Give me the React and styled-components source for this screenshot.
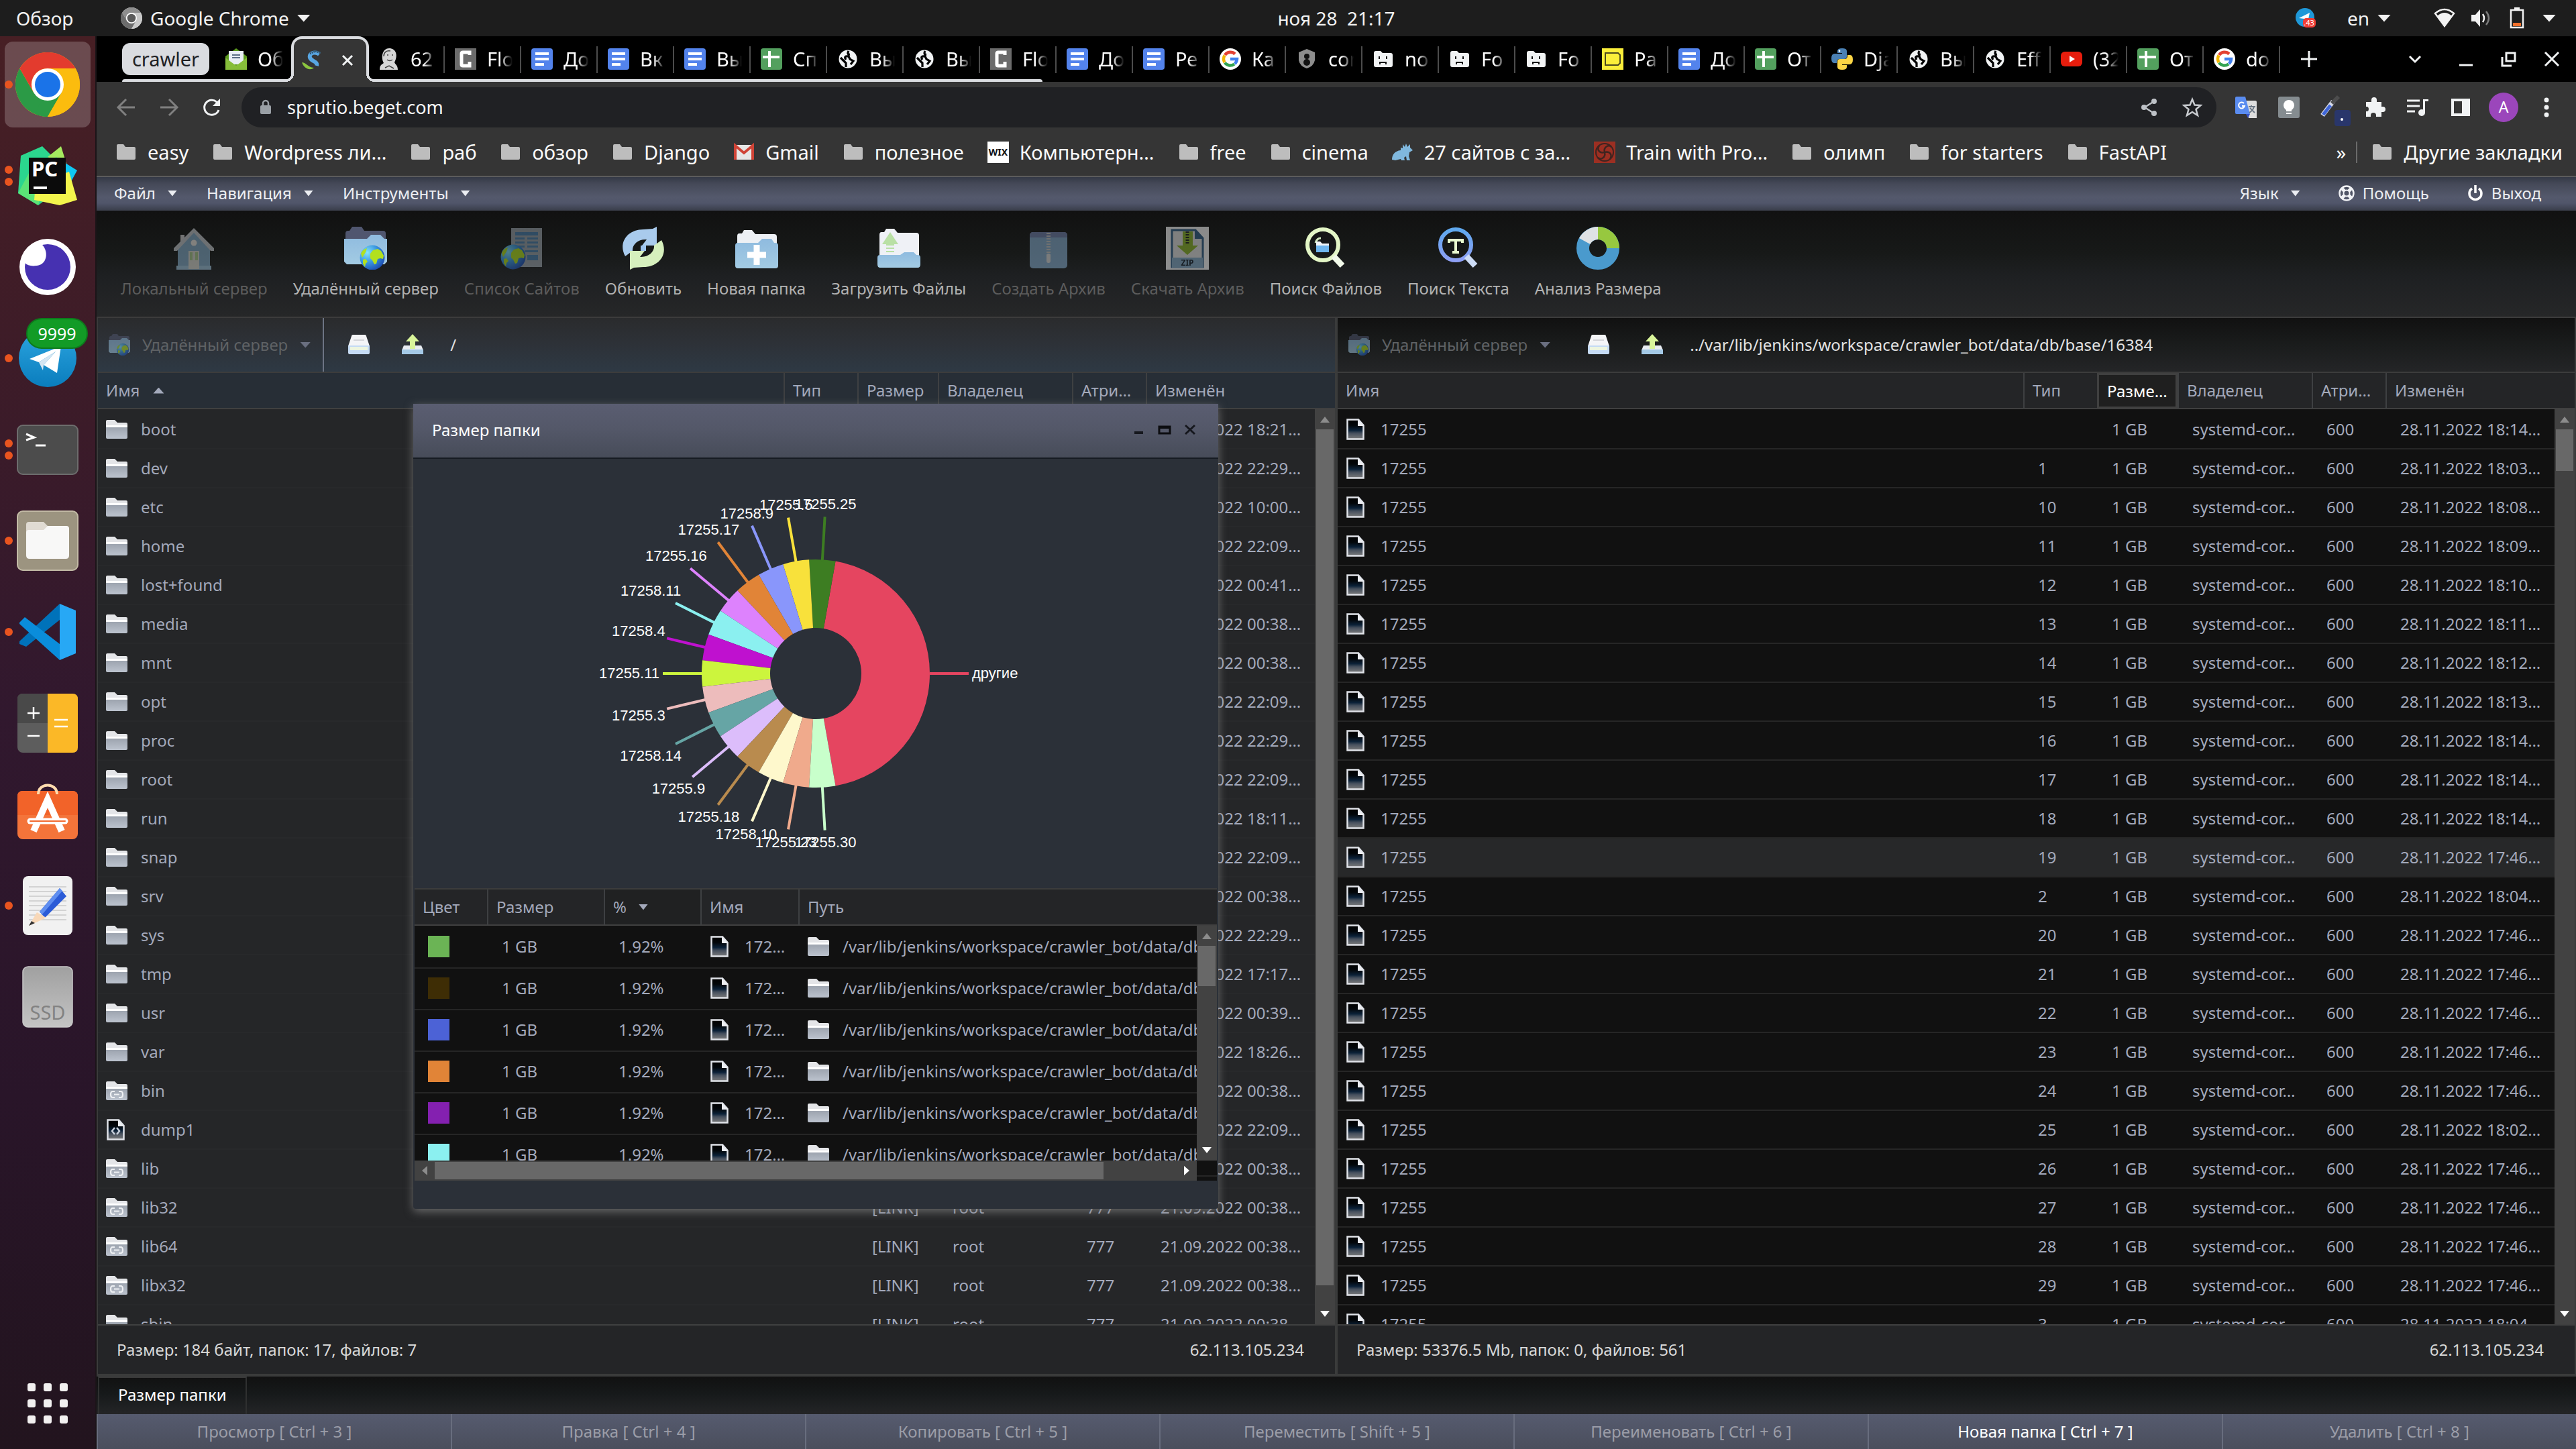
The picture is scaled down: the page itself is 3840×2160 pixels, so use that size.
import React from 'react';
import styled, { createGlobalStyle, css } from 'styled-components';

const ui = '"Noto Sans", "Open Sans", sans-serif';

const GlobalStyle = createGlobalStyle`
  * { box-sizing: border-box; }
  body { margin: 0; background: #111; font-family: ${ui}; overflow: hidden; }
  button { font: inherit; color: inherit; border: 0; padding: 0; margin: 0; background: none; cursor: pointer; }
  a { color: inherit; text-decoration: none; }
  svg { display: block; flex: none; }
`;

/* ---------- shell ---------- */

const Screen = styled.div`
  display: flex;
  flex-direction: column;
  height: 100vh;
  color: #f2f2f2;
`;

const TopBar = styled.header`
  display: grid;
  grid-template-columns: 144px 1fr auto 1fr;
  align-items: center;
  flex: none;
  height: 54px;
  background: #1d1d1d;
  font-size: 28px;
  line-height: 36px;
`;

const Overview = styled.button`
  justify-self: start;
  padding-left: 24px;
`;

const AppMenu = styled.button`
  display: flex;
  align-items: center;
  justify-self: start;
  gap: 12px;
  padding-left: 36px;
`;

const Clock = styled.time`
  white-space: pre;
`;

const Tray = styled.div`
  display: flex;
  align-items: center;
  justify-content: flex-end;
  gap: 22px;
  padding-right: 30px;
`;

const Language = styled.button`
  display: flex;
  align-items: center;
  gap: 12px;
  padding: 0 42px 0 24px;
`;

const Arrow = styled.i`
  display: inline-block;
  flex: none;
  width: ${(p) => p.$w || 14}px;
  height: ${(p) => p.$h || 9}px;
  background: ${(p) => p.$color || 'currentColor'};
  clip-path: ${(p) =>
    p.$up ? 'polygon(50% 0, 100% 100%, 0 100%)'
      : p.$left ? 'polygon(100% 0, 100% 100%, 0 50%)'
      : p.$right ? 'polygon(0 0, 100% 50%, 0 100%)'
      : 'polygon(0 0, 100% 0, 50% 100%)'};
`;

const Body = styled.div`
  display: flex;
  flex: 1;
  min-height: 0;
`;

/* ---------- dock ---------- */

const Dock = styled.nav`
  display: flex;
  flex-direction: column;
  align-items: center;
  gap: 8px;
  flex: none;
  width: 144px;
  padding: 8px 0 28px;
  border-right: 2px solid #1b1418;
  background: linear-gradient(#471f24, #3b1b29 28%, #31182e 48%, #291529 75%, #22141e);
`;

const DockButton = styled.button`
  position: relative;
  display: grid;
  place-items: center;
  width: 128px;
  height: 128px;
  border-radius: 12px;
  background: ${(p) => (p.$active ? 'rgba(255, 255, 255, 0.2)' : 'none')};
`;

const Running = styled.span`
  position: absolute;
  left: 0;
  top: 0;
  bottom: 0;
  display: flex;
  flex-direction: column;
  justify-content: center;
  gap: 6px;

  i {
    width: 12px;
    height: 12px;
    border-radius: 50%;
    background: #e9541f;
  }
`;

const Badge = styled.span`
  position: absolute;
  top: 4px;
  right: 4px;
  width: 92px;
  height: 46px;
  border: 2px solid #0d7a1c;
  border-radius: 23px;
  background: #129b26;
  color: #fff;
  font-size: 25px;
  line-height: 42px;
  text-align: center;
`;

const AppsButton = styled.button`
  display: grid;
  grid-template-columns: repeat(3, 12px);
  gap: 12px;
  margin-top: auto;
  padding: 10px;

  i {
    width: 12px;
    height: 12px;
    border-radius: 3px;
    background: #f2f0f0;
  }
`;

/* ---------- browser ---------- */

const Browser = styled.div`
  display: flex;
  flex-direction: column;
  flex: 1;
  min-width: 0;
`;

const TabStrip = styled.div`
  display: flex;
  align-items: center;
  flex: none;
  height: 68px;
  padding: 0 4px 0 38px;
  background: #000;
  font-size: 29px;
  line-height: 40px;
`;

const TabGroup = styled.div`
  position: relative;
  display: flex;
  align-items: center;
  height: 68px;

  &::after {
    content: '';
    position: absolute;
    left: 0;
    right: 20px;
    bottom: 0;
    height: 4px;
    border-radius: 4px 4px 0 0;
    background: #dadce0;
  }
`;

const GroupName = styled.button`
  width: 130px;
  height: 48px;
  margin-right: 8px;
  border-radius: 12px;
  background: #dadce0;
  color: #202124;
`;

const Tab = styled.button`
  position: relative;
  display: flex;
  align-items: center;
  gap: 16px;
  width: 114px;
  height: 68px;
  padding-left: 16px;
  color: #fff;

  ${(p) => p.$divided && css`
    &::after {
      content: '';
      position: absolute;
      right: -1px;
      top: 15px;
      width: 2px;
      height: 40px;
      background: #4c4c4c;
    }
  `}
`;

const TabTitle = styled.span`
  width: 38px;
  overflow: hidden;
  white-space: nowrap;
  text-align: left;
  mask-image: linear-gradient(90deg, #000 50%, transparent);
`;

const corner = css`
  content: '';
  position: absolute;
  bottom: 0;
  width: 12px;
  height: 12px;
`;

const ActiveTab = styled.div`
  position: relative;
  z-index: 1;
  display: flex;
  align-items: center;
  gap: 18px;
  width: 116px;
  height: 68px;
  margin-right: -2px;
  padding-left: 12px;
  border: 4px solid #dadce0;
  border-bottom: 0;
  border-radius: 16px 16px 0 0;
  background: #353535;

  &::before {
    ${corner}
    left: -12px;
    background: radial-gradient(circle at 0 0, transparent 8px, #dadce0 8px 12px, #353535 12px);
  }
  &::after {
    ${corner}
    right: -12px;
    background: radial-gradient(circle at 100% 0, transparent 8px, #dadce0 8px 12px, #353535 12px);
  }
`;

const IconButton = styled.button`
  display: grid;
  place-items: center;
  flex: none;
  width: 64px;
  height: 60px;
`;

const NewTab = styled(IconButton)`
  margin-left: 12px;
`;

const StripControls = styled.div`
  display: flex;
  margin-left: auto;

  ${IconButton}:first-child { margin-right: 12px; }
`;

const AddressRow = styled.div`
  display: flex;
  align-items: center;
  flex: none;
  height: 76px;
  padding: 0 12px;
  background: #353535;
`;

const Omnibox = styled.form`
  display: flex;
  align-items: center;
  flex: 1;
  height: 60px;
  margin: 0 12px;
  padding: 0 4px 0 24px;
  border-radius: 30px;
  background: #202124;

  input {
    flex: 1;
    min-width: 0;
    padding: 0 0 0 20px;
    border: 0;
    background: none;
    color: #f5f5f5;
    font: 27px/40px ${ui};
    outline: none;
  }
`;

const Bookmarks = styled.nav`
  display: flex;
  align-items: center;
  gap: 35px;
  flex: none;
  height: 66px;
  padding: 0 20px 6px 28px;
  border-bottom: 2px solid #5c5c5c;
  background: #353535;
  color: #fafafa;
  font-size: 29px;
  line-height: 40px;
`;

const Bookmark = styled.a`
  display: flex;
  align-items: center;
  gap: 16px;
  white-space: nowrap;
`;

const Overflow = styled.button`
  margin-left: auto;
`;

const Rule = styled.span`
  width: 2px;
  height: 32px;
  margin: 0 -14px 0 -20px;
  background: #6a6a6a;
`;

/* ---------- file manager ---------- */

const Manager = styled.main`
  position: relative;
  display: flex;
  flex-direction: column;
  flex: 1;
  min-height: 0;
  color: #a3a9bb;
  font-size: 24px;
  line-height: 32px;
`;

const MenuBar = styled.nav`
  display: flex;
  justify-content: space-between;
  flex: none;
  height: 50px;
  padding: 0 52px 0 26px;
  background: linear-gradient(#343946, #454958 20%, #54596c 60%, #50556a 78%, #3a3e4a);
  color: #eceef2;
`;

const MenuGroup = styled.div`
  display: flex;
  align-items: center;
  gap: ${(p) => p.$gap}px;
  padding-bottom: 2px;
`;

const MenuItem = styled.button`
  display: flex;
  align-items: center;
  gap: ${(p) => p.$gap || 18}px;
`;

const Toolbar = styled.div`
  display: flex;
  align-items: flex-start;
  gap: 38px;
  flex: none;
  height: 160px;
  padding: 24px 36px 0;
  border-bottom: 2px solid #3c3c3c;
  background: linear-gradient(#111, #171918 40%, #1e2022 62%, #262728);
`;

const ToolButton = styled.button`
  display: flex;
  flex-direction: column;
  align-items: center;
  gap: 12px;
  color: #b2b2b2;
  white-space: nowrap;

  &:disabled { color: #5c5c5c; }
  &:disabled svg { opacity: 0.5; }
`;

const Panes = styled.div`
  display: grid;
  grid-template-columns: 1fr 1fr;
  gap: 4px;
  flex: 1;
  min-height: 0;
  padding: 0 2px;
  background: #3a3b3b;
`;

const Pane = styled.section`
  display: flex;
  flex-direction: column;
  min-width: 0;
  min-height: 0;
`;

const PathBar = styled.div`
  display: flex;
  align-items: center;
  flex: none;
  height: 82px;
  padding-left: 16px;
  border-bottom: 2px solid #3c3c3c;
  background: ${(p) => (p.$active ? 'linear-gradient(#2a2b2d, #2d3137 45%, #2e3944)' : 'linear-gradient(#111, #1a1c1c 50%, #242527)')};
  color: #e2e2e2;
`;

const ServerButton = styled.button`
  display: flex;
  align-items: center;
  gap: 18px;
  height: 80px;
  padding-right: 18px;
  border-right: 2px solid ${(p) => (p.$active ? '#6d7484' : 'transparent')};
  color: #5f6265;

  svg { opacity: 0.5; }
`;

const PathTools = styled.div`
  display: flex;
  gap: 48px;
  padding: 0 40px 0 36px;
`;

const ListArea = styled.div`
  position: relative;
  flex: 1;
  min-height: 0;
  overflow: hidden;
  background: ${(p) => (p.$active ? '#252628' : '#111')};
`;

const FileTable = styled.table`
  width: 100%;
  table-layout: fixed;
  border-collapse: separate;
  border-spacing: 0;

  th {
    height: 54px;
    padding: 0 0 0 12px;
    border-bottom: 2px solid #404040;
    border-left: 2px solid #3e4042;
    background: ${(p) => (p.$active ? '#272e36' : '#242527')};
    font-weight: 400;
    text-align: left;
    white-space: nowrap;
  }
  th:first-child, td:first-child { border-left: 0; padding-left: 12px; }
  td {
    height: 58px;
    padding: 0 16px 0 22px;
    border-bottom: 2px solid ${(p) => (p.$active ? '#28292b' : '#262626')};
    overflow: hidden;
    white-space: nowrap;
  }
  tbody tr:first-child td { height: 60px; border-top: 2px solid transparent; }
`;

const HoverHead = styled.th`
  && {
    border: 3px solid #404040;
    border-bottom-width: 4px;
    background: #1f1f1f;
    color: #fff;
  }
`;

const FileRow = styled.tr`
  background: ${(p) => (p.$hover ? '#272829' : 'none')};
`;

const NameCell = styled.div`
  display: flex;
  align-items: center;
  gap: 20px;
`;

const SortLabel = styled.span`
  display: inline-flex;
  align-items: center;
  gap: ${(p) => p.$gap || 18}px;
`;

const VScroll = styled.div`
  position: absolute;
  top: ${(p) => p.$top}px;
  right: 0;
  bottom: ${(p) => p.$bottom || 0}px;
  display: flex;
  flex-direction: column;
  align-items: center;
  justify-content: space-between;
  width: 30px;
  padding: 11px 0;
  background: #424242;

  &::before {
    content: '';
    position: absolute;
    top: 30px;
    left: 2px;
    right: 2px;
    height: ${(p) => p.$size};
    background: #686868;
  }
`;

const HScroll = styled.div`
  position: absolute;
  left: 0;
  right: 30px;
  bottom: 0;
  display: flex;
  align-items: center;
  justify-content: space-between;
  height: 30px;
  padding: 0 11px;
  background: #424242;

  &::before {
    content: '';
    position: absolute;
    left: 30px;
    top: 2px;
    bottom: 2px;
    width: 997px;
    background: #686868;
  }
`;

const PaneStatus = styled.footer`
  display: flex;
  align-items: center;
  justify-content: space-between;
  flex: none;
  height: 74px;
  padding: 0 46px 0 28px;
  border-top: 2px solid #404040;
  background: #242527;
  color: #d8d8d8;
`;

const TaskBar = styled.div`
  flex: none;
  height: 60px;
  border-top: 4px solid #3a3b3b;
  background: linear-gradient(#111, #16191a 45%, #242527);
`;

const TaskButton = styled.button`
  height: 56px;
  margin-left: 2px;
  padding: 0 28px 4px;
  border: 2px solid #2f3030;
  border-top-color: #3a3a3a;
  border-bottom: 0;
  color: #fff;
`;

const KeyBar = styled.div`
  display: grid;
  grid-template-columns: repeat(7, 1fr);
  flex: none;
  height: 52px;
  background: linear-gradient(#565b6f, #4a4e5c);
`;

const KeyButton = styled.button`
  border-left: 2px solid #686d7e;
  color: #fff;

  &:disabled { color: #9b9da8; }
`;

/* ---------- size window ---------- */

const Window = styled.section`
  position: absolute;
  top: 338px;
  left: 472px;
  display: flex;
  flex-direction: column;
  width: 1200px;
  height: 1200px;
  border-radius: 0 0 4px 4px;
  background: #2b3038;
  box-shadow: 0 4px 14px rgba(130, 130, 130, 0.75);
`;

const WindowTitle = styled.header`
  display: flex;
  align-items: center;
  flex: none;
  height: 82px;
  padding: 0 30px 2px 28px;
  border-bottom: 2px solid #161b22;
  background: linear-gradient(#5a5d71, #545869 45%, #474c59);
  color: #fff;
`;

const WindowButtons = styled.div`
  display: flex;
  gap: 14px;
  margin-left: auto;
`;

const ChartArea = styled.div`
  flex: none;
  height: 640px;

  text {
    font: 22px "Liberation Sans", Arial, sans-serif;
    fill: #fff;
  }
`;

const SizeList = styled.div`
  position: relative;
  flex: none;
  height: 436px;
  margin: 0 2px;
  border-top: 2px solid #3c3c3c;
  overflow: hidden;
  background: #111;
`;

const SizeTable = styled(FileTable)`
  td { height: 62px; padding-bottom: 2px; }
  td:first-child { padding-left: 20px; }
  td:nth-child(n + 4) { padding: 0 0 2px 14px; }
  tbody tr:first-child td { height: 64px; }
  th:nth-child(3) { background: #202122; }
`;

const Swatch = styled.i`
  display: block;
  width: 32px;
  height: 32px;
  background: ${(p) => p.$color};
`;

/* ---------- dock drawings ---------- */

const Art = ({ children, size = 96 }) => (
  <svg width={size} height={size} viewBox="0 0 96 96" aria-hidden="true">{children}</svg>
);

const ChromeArt = ({ size = 96, grey }) => {
  const [r, y, g, b] = grey ? ['#8e8e8e', '#c9c9c9', '#6c6c6c', '#5b5b5b'] : ['#e33b2e', '#fbbc0e', '#2b9a46', '#1a73e8'];
  return (
    <Art size={size}>
      <circle cx="48" cy="48" r="48" fill={y} />
      <path d="M6.4 24A48 48 0 0 1 89.6 24H48z" fill={r} />
      <path d="M6.4 24L27.2 60 48 72 48 96A48 48 0 0 1 6.4 24z" fill={g} />
      <path d="M68.8 60L48 96A48 48 0 0 1 30 92L40 66z" fill={g} />
      <path d="M6.4 24L27.2 60A24 24 0 0 1 48 24z" fill={r} />
      <path d="M48 24H89.6A48 48 0 0 1 48 96L68.8 60z" fill={y} />
      <circle cx="48" cy="48" r="24" fill="#fff" />
      <circle cx="48" cy="48" r="19" fill={b} />
    </Art>
  );
};

const PyCharmArt = () => (
  <Art>
    <path d="M8 18L40 4 58 22 50 80 34 92 4 74z" fill="#2bd68e" />
    <path d="M48 20L68 4 76 30z" fill="#a5ea5f" />
    <path d="M60 20L92 40 80 62 60 50z" fill="#0fc7f2" />
    <path d="M4 74L20 44 40 70 34 92z" fill="#5be377" />
    <path d="M80 42L92 84 66 92 28 84 30 60z" fill="#f3f54c" />
    <rect x="20" y="21" width="55" height="54" fill="#0b0b0b" />
    <text x="24" y="49" fontFamily="Noto Sans, sans-serif" fontWeight="700" fontSize="31" fill="#fff">PC</text>
    <rect x="27" y="64" width="20" height="4" fill="#fff" />
  </Art>
);

const InsomniaArt = () => (
  <Art>
    <circle cx="48" cy="48" r="42" fill="#fff" />
    <circle cx="48" cy="48" r="34" fill="#4631b1" />
    <path d="M14 42C14 24 26 14 40 15 50 26 46 42 36 45 26 48 18 46 14 42z" fill="#fff" />
  </Art>
);

const TelegramArt = () => (
  <Art>
    <defs><linearGradient id="tg" x2="0" y2="1"><stop stopColor="#2ca5e0" /><stop offset="1" stopColor="#0a7dbd" /></linearGradient></defs>
    <circle cx="48" cy="48" r="43" fill="url(#tg)" />
    <path d="M21 49L68 30 62 70 42 58 60 38 35 54z" fill="#fff" />
    <path d="M35 54L60 38 42 58 41 66z" fill="#d5e6f2" />
  </Art>
);

const TerminalArt = () => (
  <Art>
    <rect x="3" y="12" width="90" height="73" rx="8" fill="#4c4c4c" stroke="#6d6d6d" strokeWidth="2" />
    <path d="M16 25L28 30 16 34" fill="none" stroke="#fff" strokeWidth="3" />
    <path d="M30 42H45" stroke="#fff" strokeWidth="3" />
  </Art>
);

const FilesArt = () => (
  <Art>
    <rect x="3" y="4" width="90" height="88" rx="8" fill="#9c9480" stroke="#c2baa5" strokeWidth="2" />
    <path d="M16 24q0-4 4-4H42L48 26H74q6 0 6 6V40H16z" fill="#e0dbd2" />
    <path d="M16 36q0-4 4-4H42L48 26H76q4 0 4 4V70q0 5-5 5H21q-5 0-5-5z" fill="#f8f8f7" />
  </Art>
);

const CodeArt = () => (
  <Art>
    <path d="M6 62L66 6V30L16 70 6 66z" fill="#0072ba" />
    <path d="M6 34L14 26 66 66V90L6 36z" fill="#0a8ddb" />
    <path d="M66 6L90 16V80L66 90z" fill="#27a8f5" />
  </Art>
);

const CalcArt = () => (
  <Art>
    <rect x="3" y="4" width="90" height="88" rx="8" fill="#5d5d5d" />
    <path d="M11 4H48V48H3V12q0-8 8-8z" fill="#494949" />
    <path d="M48 4H85q8 0 8 8V84q0 8-8 8H48z" fill="#fbb827" />
    <path d="M18 33H36M27 24V42M18 67H36M58 43H78M58 53H78" stroke="#fff" strokeWidth="2.5" />
  </Art>
);

const StoreArt = () => (
  <Art>
    <rect x="3" y="13" width="90" height="72" rx="8" fill="#f4743a" />
    <path d="M3 49V21q0-8 8-8H85q8 0 8 8V49z" fill="#f26329" />
    <path d="M34 18C34 0 62 0 62 18" fill="none" stroke="#ffdcae" strokeWidth="4" />
    <path d="M27 73L48 26 69 73" fill="none" stroke="#fff" strokeWidth="10" />
    <path d="M22 58H74" stroke="#fff" strokeWidth="9" strokeLinecap="round" />
    <path d="M22 58H74" stroke="#f26a30" strokeWidth="2" strokeLinecap="round" />
  </Art>
);

const EditorArt = () => (
  <Art>
    <rect x="11" y="4" width="74" height="88" rx="8" fill="#f1f1f1" />
    <path d="M20 20H76M20 27H76M20 34H76M20 41H76M20 48H76M20 55H76M20 62H76M20 69H76" stroke="#c9c9c9" strokeWidth="1.5" />
    <path d="M36 57L66 22 76 34 44 66z" fill="#2b5bd7" />
    <path d="M36 57L66 22 70 26 40 61z" fill="#5f8ef0" />
    <path d="M20 78L32 58 46 66z" fill="#f8d8b8" />
    <path d="M20 78L24 71 29 74z" fill="#333" />
  </Art>
);

const SsdArt = () => (
  <Art>
    <defs><linearGradient id="ssd" x2="0" y2="1"><stop stopColor="#a0a0a0" /><stop offset="1" stopColor="#c4c4c4" /></linearGradient></defs>
    <rect x="11" y="3" width="74" height="90" rx="8" fill="url(#ssd)" stroke="#c9c9c9" strokeWidth="1.5" />
    <text x="48" y="82" textAnchor="middle" fontFamily="Noto Sans, sans-serif" fontSize="29" fill="#828282">SSD</text>
  </Art>
);

/* ---------- small drawings ---------- */

const Glyph = ({ s = 32, box = 32, children, ...rest }) => (
  <svg width={s} height={s} viewBox={`0 0 ${box} ${box}`} fill="none" aria-hidden="true" {...rest}>{children}</svg>
);

const Favicons = {
  mail: (
    <Glyph>
      <path d="M0 12L16 0 32 12V32H0z" fill="#5b9a1f" />
      <rect x="5" y="4" width="22" height="20" fill="#e8eef5" />
      <path d="M10 10H22M10 14H22" stroke="#5c6f86" strokeWidth="2" />
      <path d="M0 14L16 26 32 14V32H0z" fill="#86bd3a" />
    </Glyph>
  ),
  beget: (
    <Glyph>
      <path d="M26 7C20 2 10 5 12 12 14 18 24 17 22 24" stroke="#58a6e2" strokeWidth="6" />
      <path d="M12 6L20 2 28 5" stroke="#32536c" strokeWidth="3" strokeDasharray="2 1" />
      <path d="M0 19C8 20 8 26 18 27 12 32 3 28 0 19z" fill="#8cc63f" />
    </Glyph>
  ),
  jenkins: (
    <Glyph>
      <path d="M2 32C2 25 5 24 8 22 3 12 7 0 16 0 26 0 30 10 24 21 25 24 29 25 29 32z" fill="#d6d6d6" />
      <path d="M8 12C8 6 12 3 18 4M20 10h2M13 10h2M13 17q4 3 8 0M10 29L16 26 23 30" stroke="#444" strokeWidth="1.5" />
    </Glyph>
  ),
  c: (
    <Glyph>
      <rect width="32" height="32" fill="#6b6b6b" />
      <path d="M22 10V6H12q-2 0-2 2V24q0 2 2 2H22V20" stroke="#fff" strokeWidth="5" />
    </Glyph>
  ),
  doc: (
    <Glyph>
      <rect width="32" height="32" rx="4" fill="#5383ec" />
      <path d="M6 8H26M6 16H26M6 24H19" stroke="#fff" strokeWidth="4" />
    </Glyph>
  ),
  sheet: (
    <Glyph>
      <rect width="32" height="32" rx="4" fill="#53a05e" />
      <path d="M3 13H28M13 4V28" stroke="#fff" strokeWidth="4" />
    </Glyph>
  ),
  globe: (
    <Glyph>
      <circle cx="16" cy="16" r="13.5" fill="#f1f3f4" />
      <path d="M5 14L13 22V28M17 4q-3 6 2 5M13 17q-4-6 4-5l2 4 5 3-4 5" stroke="#000" strokeWidth="3.2" />
    </Glyph>
  ),
  google: (
    <Glyph>
      <circle cx="16" cy="16" r="16" fill="#fff" />
      <path d="M23 8.5A10 10 0 0 0 8 10" stroke="#e34133" strokeWidth="4.5" />
      <path d="M7.6 10.5A10 10 0 0 0 7.6 21" stroke="#f3b605" strokeWidth="4.5" />
      <path d="M7.8 21.5A10 10 0 0 0 22 23.5" stroke="#32a350" strokeWidth="4.5" />
      <path d="M22.5 23A10 10 0 0 0 26 16H16" stroke="#4080ee" strokeWidth="4.5" />
    </Glyph>
  ),
  shield: (
    <Glyph>
      <path d="M16 1L28 6V18Q26 27 16 30 6 27 4 18V6z" fill="#8d8d8d" />
      <circle cx="16" cy="12" r="4" fill="#111" />
      <circle cx="16" cy="21" r="5" fill="#111" />
    </Glyph>
  ),
  sad: (
    <Glyph>
      <path d="M2 7q0-3 3-3H12L15 7H27q3 0 3 3V25q0 3-3 3H5q-3 0-3-3z" fill="#f1f3f4" />
      <path d="M10 12V16M21 12V16M11 24V21H20V24" stroke="#111" strokeWidth="2" />
    </Glyph>
  ),
  yellow: (
    <Glyph>
      <rect width="32" height="32" fill="#fbef3a" />
      <path d="M5 7H24L27 10V22L24 25H5z" stroke="#4c4a1e" strokeWidth="2" />
    </Glyph>
  ),
  python: (
    <Glyph>
      <path d="M9 4q0-4 7-4 7 0 7 4V12q0 4-4 4H12q-4 0-4 6H4q-4 0-4-7T5 8H16V7H9z" fill="#4a80b4" />
      <path d="M23 28q0 4-7 4-7 0-7-4V20q0-4 4-4h7q4 0 4-6h4q4 0 4 7t-5 7H16v1h7z" fill="#fcd545" />
      <circle cx="12" cy="4" r="1.4" fill="#fff" />
    </Glyph>
  ),
  youtube: (
    <Glyph>
      <rect y="5" width="32" height="22" rx="6" fill="#e71d0d" />
      <path d="M13 11L21 16 13 21z" fill="#fff" />
    </Glyph>
  ),
  folder: (
    <Glyph>
      <path d="M2 6q0-2 2-2H12L15 8H28q2 0 2 2V25q0 2-2 2H4q-2 0-2-2z" fill="#bdbdbd" />
    </Glyph>
  ),
  gmail: (
    <Glyph>
      <rect x="2" y="5" width="28" height="22" fill="#e6e6e6" />
      <path d="M3 27V6L16 17 29 6V27" stroke="#cf4336" strokeWidth="4" />
    </Glyph>
  ),
  wix: (
    <Glyph>
      <rect width="32" height="32" fill="#fff" />
      <text x="16" y="21" textAnchor="middle" fontFamily="Noto Sans, sans-serif" fontWeight="700" fontSize="14" fill="#111">WIX</text>
    </Glyph>
  ),
  sites: (
    <Glyph>
      <path d="M0 27C0 20 4 14 13 13L13 9 16 10 16 4 19 8 21 3 23 8 27 4 27 9 31 13 26 16 25 22 27 28H22L21 22 18 24 19 28H14L13 26 5 28z" fill="#80b8de" />
    </Glyph>
  ),
  train: (
    <Glyph>
      <rect width="32" height="32" fill="#9c2f22" />
      <path d="M16 16C14 8 22 4 26 8M16 16C24 14 28 20 24 26M16 16C18 24 10 28 6 24M16 16C8 18 4 12 8 6" stroke="#3f2420" strokeWidth="2.5" />
      <circle cx="16" cy="16" r="13" stroke="#3f2420" strokeWidth="2" />
    </Glyph>
  ),
};

const line = { stroke: '#f1f3f4', strokeWidth: 3 };

const FolderIcon = ({ link }) => (
  <Glyph>
    <defs>
      <linearGradient id="fold" x2="0" y2="1"><stop stopColor="#9da4af" /><stop offset="1" stopColor="#bcc3ce" /></linearGradient>
    </defs>
    <path d="M0 4q0-2 2-2H13L17 6H30q2 0 2 2V14H0z" fill="#e4e5e8" />
    <rect y="10" width="32" height="3" fill="#fff" />
    <path d="M0 13H32V28q0 2-2 2H2q-2 0-2-2z" fill="url(#fold)" />
    {link && <path d="M13 17H10q-3 0-3 4.500T10 26H13M19 17H22q3 0 3 4.500T22 26H19M12 21.500H20" stroke="#eef0f3" strokeWidth="2.200" />}
  </Glyph>
);

const FileIcon = ({ code }) => (
  <Glyph>
    <defs>
      <linearGradient id="page" x2="0" y2="1"><stop stopColor="#000" /><stop offset=".3" stopColor="#02060a" /><stop offset=".55" stopColor="#0b2138" /><stop offset=".7" stopColor="#454f5d" /><stop offset="1" stopColor="#7c7c7c" /></linearGradient>
    </defs>
    <path d="M2.500 1.500H19L26.500 10V30.500H2.500z" fill="url(#page)" stroke="#dfe2e8" strokeWidth="2.5" />
    <path d="M18 1L27 11H18z" fill="#eceef2" />
    {code && <path d="M13 13L9 18 13 23M16 13L20 18 16 23" stroke="#c9d0dc" strokeWidth="2.5" />}
  </Glyph>
);

const DiskIcon = () => (
  <Glyph>
    <path d="M5 3q0-2 2-2H25q2 0 2 2L32 18V27q0 3-3 3H3q-3 0-3-3V18z" fill="#f4f5f7" />
    <path d="M0 17H32V27q0 3-3 3H3q-3 0-3-3z" fill="#c5dbf4" />
    <path d="M3 19H29V24H3z" fill="#edf5e0" />
    <path d="M8 9H24" stroke="#d4d6da" strokeWidth="2" />
  </Glyph>
);

const UpIcon = () => (
  <Glyph>
    <path d="M3 17H29L32 24H0z" fill="#e9edf2" />
    <path d="M0 23H32V30H0z" fill="#a4c9e6" />
    <path d="M16 0L26 11H20V22H12V11H6z" fill="#d9f59a" />
  </Glyph>
);

const Globe = ({ cx, cy }) => (
  <g transform={`translate(${cx} ${cy})`}>
    <circle r="18.500" fill="url(#ocean)" />
    <path d="M-17 -6Q-14 -13 -8 -14L-10 -8 -15 0zM-14 3L-10 2 -7 6 -10 9 -11 14 -14 9zM-3 -6L1 -11 8 -13 13 -10 17 -3 16 2 12 1 8 2 6 9 3 10 0 4 -3 1z" fill="#b2e01f" />
  </g>
);

const Tool = ({ children, size = 64 }) => (
  <svg width={size} height={size} viewBox="0 0 64 64" fill="none" aria-hidden="true">
    <defs>
      <radialGradient id="ocean" cx=".3" cy=".3" r=".8"><stop stopColor="#84e4fb" /><stop offset=".5" stopColor="#3a97e0" /><stop offset="1" stopColor="#1a49b0" /></radialGradient>
      <linearGradient id="sky" x2="0" y2="1"><stop stopColor="#8fbbdf" /><stop offset="1" stopColor="#a3cbe3" /></linearGradient>
      <linearGradient id="lens" x2="0" y2="1"><stop stopColor="#5fa8ee" /><stop offset="1" stopColor="#8ea0f5" /></linearGradient>
    </defs>
    {children}
  </svg>
);

const RemoteArt = ({ size }) => (
  <Tool size={size}>
    <path d="M2 10q0-4 4-4H8L12 0H26L30 6H58q4 0 4 4V20H2z" fill="#50566f" />
    <path d="M0 18H34L40 12H54L60 18H64V52L60 56H4L0 52z" fill="url(#sky)" />
    <Globe cx={42} cy={46} />
  </Tool>
);

const toolIcons = {
  home: (
    <Tool>
      <path d="M12 12H18V26H12z" fill="#d0d0d0" />
      <path d="M8 34L32 8 56 34V60H8z" fill="#82a9c6" />
      <path d="M6 58H58V64H6z" fill="#9dc2da" />
      <path d="M32 2L62 32V36H57L32 9 7 36H2V32z" fill="#c4c8cd" />
      <circle cx="32" cy="24" r="4.500" fill="#ece9e4" />
      <path d="M24 36H40V63H24z" fill="#d8d8cf" />
      <path d="M26 38H30V50H26zM34 38H38V50H34z" fill="#a9c98c" />
    </Tool>
  ),
  remote: <RemoteArt />,
  sites: (
    <Tool>
      <path d="M16 2H62V60H16z" fill="#9ba4ac" />
      <path d="M22 8H56V13H22zM22 16H36V19H22zM22 22H36V25H22zM22 28H36V31H22zM40 16H56V19H40zM40 22H56V25H40zM40 28H56V31H40zM36 35H56V38H36zM40 42H56V50H40z" fill="#4b82b0" />
      <Globe cx={19} cy={45} />
    </Tool>
  ),
  refresh: (
    <Tool>
      <path d="M5 44C-6 24 8 4 32 4L46 3 52 0V28H30L37 19C24 18 15 27 16 36z" fill="#a9cbed" />
      <path d="M59 20C70 40 56 60 32 60L18 61 12 64V36H34L27 45C40 46 49 37 48 28z" fill="#d6f0bd" />
      <rect x="28" y="28" width="8" height="8" fill="#9cc4ee" />
    </Tool>
  ),
  newFolder: (
    <Tool>
      <path d="M3 14q0-4 3-4H10L13 5H25L30 11H58q4 0 4 4V34H3z" fill="#edf0f4" />
      <path d="M0 28q0-4 4-4H34L40 18H54L58 24H60q4 0 4 4V58q0 4-4 4H4q-4 0-4-4z" fill="url(#sky)" />
      <path d="M32 27V57M18 42H46" stroke="#fff" strokeWidth="9" />
    </Tool>
  ),
  upload: (
    <Tool>
      <path d="M3 12q0-4 3-4H10L13 3H25L30 9H58q4 0 4 4V46H3z" fill="#eff1f6" />
      <path d="M0 46q0-4 4-4H34L40 38H54L58 42H60q4 0 4 4V56q0 5-4 5H4q-4 0-4-5z" fill="url(#sky)" />
      <path d="M19 8L31 26H25V28H13V26H7zM13 31H25V33H13zM13 36H25V38H13z" fill="#b9e0a5" />
    </Tool>
  ),
  archive: (
    <Tool>
      <rect x="4" y="8" width="56" height="54" rx="5" fill="#86acce" />
      <path d="M4 16V13q0-5 5-5H55q5 0 5 5V16z" fill="#7282ac" />
      <path d="M32 9V50" stroke="#cacaca" strokeWidth="6" strokeDasharray="2 2" />
      <rect x="29" y="40" width="6" height="14" rx="3" fill="#ddd" />
    </Tool>
  ),
  zip: (
    <Tool>
      <rect width="64" height="64" fill="#fff" />
      <path d="M9 5H44L55 17V60H9z" fill="#e8e8e8" stroke="#33628c" strokeWidth="3" />
      <path d="M43 4L56 18H43z" fill="#33628c" />
      <rect x="9" y="46" width="46" height="15" fill="#86acca" />
      <path d="M25 7H40V28H48L32 42 16 28H25z" fill="#8fb82c" />
      <path d="M32 7V26" stroke="#222" strokeWidth="5" strokeDasharray="2 2" />
      <text x="32" y="58" textAnchor="middle" fontFamily="Noto Sans, sans-serif" fontWeight="700" fontSize="12" fill="#16202b">ZIP</text>
    </Tool>
  ),
  findFile: (
    <Tool>
      <circle cx="28" cy="27" r="23" stroke="#e3f6c6" strokeWidth="6" />
      <path d="M44 44L57 58" stroke="#f2faea" strokeWidth="9" />
      <path d="M17 24Q19 17 25 17" stroke="#cfe6bd" strokeWidth="3" />
      <path d="M18 22H24L27 25H37V30H18z" fill="#f2f5f8" />
      <path d="M18 28H37V38H18z" fill="#6fb6ee" />
    </Tool>
  ),
  findText: (
    <Tool>
      <circle cx="28" cy="27" r="23" stroke="url(#lens)" strokeWidth="6" />
      <path d="M44 44L57 58" stroke="#cddcf6" strokeWidth="9" />
      <path d="M18 24V20H38V24M28 20V38M23 38H33" stroke="#e9f9cf" strokeWidth="4" />
    </Tool>
  ),
  donut: (
    <Tool>
      <circle cx="32" cy="32" r="22.500" stroke="#4a9acd" strokeWidth="19" />
      <path d="M32 0A32 32 0 0 1 64 32H45A13 13 0 0 0 32 19z" fill="#97c83f" />
      <path d="M32 0A32 32 0 0 0 4 17L20.500 26A13 13 0 0 1 32 19z" fill="#dfe2e4" />
    </Tool>
  ),
};

/* ---------- data ---------- */

const dockItems = [
  ['Google Chrome', <ChromeArt />, 1],
  ['PyCharm', <PyCharmArt />, 2],
  ['Insomnia', <InsomniaArt />, 0],
  ['Telegram', <TelegramArt />, 1],
  ['Terminal', <TerminalArt />, 2],
  ['Files', <FilesArt />, 1],
  ['Visual Studio Code', <CodeArt />, 1],
  ['Calculator', <CalcArt />, 0],
  ['Ubuntu Software', <StoreArt />, 0],
  ['Text Editor', <EditorArt />, 1],
  ['SSD', <SsdArt />, 0],
];

const groupTabs = [
  ['jenkins', '62'], ['c', 'Flo'], ['doc', 'До'], ['doc', 'Вк'], ['doc', 'Вы'], ['sheet', 'Сп'],
  ['globe', 'Вы'], ['globe', 'Вы'], ['c', 'Flo'],
];

const looseTabs = [
  ['doc', 'До'], ['doc', 'Ре'], ['google', 'Ка'], ['shield', 'con'], ['sad', 'no'], ['sad', 'Fo'], ['sad', 'Fo'],
  ['yellow', 'Pa'], ['doc', 'До'], ['sheet', 'От'], ['python', 'Dja'], ['globe', 'Вы'], ['globe', 'Eff'],
  ['youtube', '(32'], ['sheet', 'От'], ['google', 'do'],
];

const bookmarks = [
  ['folder', 'easy'], ['folder', 'Wordpress ли…'], ['folder', 'раб'], ['folder', 'обзор'], ['folder', 'Django'],
  ['gmail', 'Gmail'], ['folder', 'полезное'], ['wix', 'Компьютерн…'], ['folder', 'free'], ['folder', 'cinema'],
  ['sites', '27 сайтов с за…'], ['train', 'Train with Pro…'], ['folder', 'олимп'], ['folder', 'for starters'], ['folder', 'FastAPI'],
];

const tools = [
  ['Локальный сервер', 'home', true],
  ['Удалённый сервер', 'remote'],
  ['Список Сайтов', 'sites', true],
  ['Обновить', 'refresh'],
  ['Новая папка', 'newFolder'],
  ['Загрузить Файлы', 'upload'],
  ['Создать Архив', 'archive', true],
  ['Скачать Архив', 'zip', true],
  ['Поиск Файлов', 'findFile'],
  ['Поиск Текста', 'findText'],
  ['Анализ Размера', 'donut'],
];

const leftFiles = [
  ['boot', '18:21'], ['dev', '22:29'], ['etc', '10:00'], ['home', '22:09'], ['lost+found', '00:41'], ['media', '00:38'],
  ['mnt', '00:38'], ['opt', '22:09'], ['proc', '22:29'], ['root', '22:09'], ['run', '18:11'], ['snap', '22:09'],
  ['srv', '00:38'], ['sys', '22:29'], ['tmp', '17:17'], ['usr', '00:39'], ['var', '18:26'], ['bin', '00:38', 'link'],
  ['dump1', '22:09', 'code'], ['lib', '00:38', 'link'], ['lib32', '00:38', 'link'], ['lib64', '00:38', 'link'],
  ['libx32', '00:38', 'link'], ['sbin', '00:38', 'link'],
];

const rightFiles = [
  ['', '18:14'], ['1', '18:03'], ['10', '18:08'], ['11', '18:09'], ['12', '18:10'], ['13', '18:11'], ['14', '18:12'],
  ['15', '18:13'], ['16', '18:14'], ['17', '18:14'], ['18', '18:14'], ['19', '17:46'], ['2', '18:04'], ['20', '17:46'],
  ['21', '17:46'], ['22', '17:46'], ['23', '17:46'], ['24', '17:46'], ['25', '18:02'], ['26', '17:46'], ['27', '17:46'],
  ['28', '17:46'], ['29', '17:46'], ['3', '18:04'],
];

/* name, colour, radius at which the leader line ends */
const slices = [
  ['17255.25', '#3d7d22', 234], ['17255.5', '#f8e13b', 236], ['17258.9', '#8996fb', 240], ['17255.17', '#e18437', 244],
  ['17255.16', '#dd82fd', 244], ['17258.11', '#8bf0f0', 234], ['17258.4', '#bf11cf', 228], ['17255.11', '#ccf53d', 228],
  ['17255.3', '#edbcbc', 228], ['17258.14', '#66a5a5', 234], ['17255.9', '#dcbdfb', 240], ['17255.18', '#b98b4e', 244],
  ['17258.10', '#fef8cc', 240], ['17255.23', '#f0aa8c', 236], ['17255.30', '#c8ffcb', 234],
];

const swatches = ['#6bb455', '#3e2d05', '#4c62d6', '#e18437', '#8420b0', '#8bf0f0'];

const keys = [
  'Просмотр [ Ctrl + 3 ]', 'Правка [ Ctrl + 4 ]', 'Копировать [ Ctrl + 5 ]', 'Переместить [ Shift + 5 ]',
  'Переименовать [ Ctrl + 6 ]', 'Новая папка [ Ctrl + 7 ]', 'Удалить [ Ctrl + 8 ]',
];

/* ---------- parts ---------- */

const point = (r, deg) => {
  const a = (deg * Math.PI) / 180;
  return [600 + r * Math.sin(a), 320 - r * Math.cos(a)];
};

const ring = (from, to) => {
  const [a, b, c, d] = [point(170, from), point(170, to), point(68, to), point(68, from)];
  return `M${a}A170 170 0 0 0 ${b}L${c}A68 68 0 0 1 ${d}z`;
};

function Donut() {
  const step = 200 / slices.length;
  return (
    <svg width="1200" height="640" viewBox="0 0 1200 640" role="img" aria-label="Размер папки">
      <path d={ring(170, 10)} fill="#e54560" />
      <path d="M770 320H828" stroke="#e54560" strokeWidth="4" />
      <text x="833" y="327">другие</text>
      {slices.map(([name, color, reach], i) => {
        const mid = 10 - step * (i + 0.5);
        const [x1, y1] = point(168, mid);
        const [x2, y2] = point(reach, mid);
        const side = Math.abs(Math.sin((mid * Math.PI) / 180));
        const [tx, ty] = point(251 + (name.length > 7 ? 27 : 21) * side, mid);
        return (
          <g key={name}>
            <path d={ring(10 - step * i, 10 - step * (i + 1))} fill={color} />
            <path d={`M${x1} ${y1}L${x2} ${y2}`} stroke={color} strokeWidth="4" />
            <text x={tx} y={ty + 7} textAnchor="middle">{name}</text>
          </g>
        );
      })}
    </svg>
  );
}

const FileCols = () => (
  <colgroup>
    <col />
    <col style={{ width: 110 }} />
    <col style={{ width: 120 }} />
    <col style={{ width: 200 }} />
    <col style={{ width: 110 }} />
    <col style={{ width: 282 }} />
  </colgroup>
);

function PathPanel({ active, path }) {
  return (
    <PathBar $active={active}>
      <ServerButton $active={active} disabled>
        <RemoteArt size={32} />
        Удалённый сервер
        <Arrow $w={16} $color="#6a6f80" />
      </ServerButton>
      <PathTools>
        <button aria-label="Диск"><DiskIcon /></button>
        <button aria-label="Вверх"><UpIcon /></button>
      </PathTools>
      {path}
    </PathBar>
  );
}

function LeftPane() {
  return (
    <Pane>
      <PathPanel active path="/" />
      <ListArea $active>
        <FileTable $active>
          <FileCols />
          <thead>
            <tr>
              <th><SortLabel $gap={20}>Имя <Arrow $up $w={16} /></SortLabel></th>
              <th>Тип</th><th>Размер</th><th>Владелец</th><th>Атри…</th><th>Изменён</th>
            </tr>
          </thead>
          <tbody>
            {leftFiles.map(([name, time, kind]) => (
              <FileRow key={name}>
                <td><NameCell>{kind === 'code' ? <FileIcon code /> : <FolderIcon link={kind === 'link'} />}{name}</NameCell></td>
                <td />
                <td>{kind === 'link' ? '[LINK]' : ''}</td>
                <td>root</td>
                <td>{kind === 'link' ? '777' : '755'}</td>
                <td>21.09.2022 {time}…</td>
              </FileRow>
            ))}
          </tbody>
        </FileTable>
        <VScroll $top={54} $size="calc(100% - 88px)"><Arrow $up $w={14} $color="#8c8c8c" /><Arrow $w={14} $color="#fff" /></VScroll>
      </ListArea>
      <PaneStatus><span>Размер: 184 байт, папок: 17, файлов: 7</span><span>62.113.105.234</span></PaneStatus>
    </Pane>
  );
}

function RightPane() {
  return (
    <Pane>
      <PathPanel path="../var/lib/jenkins/workspace/crawler_bot/data/db/base/16384" />
      <ListArea>
        <FileTable>
          <FileCols />
          <thead>
            <tr><th>Имя</th><th>Тип</th><HoverHead>Разме…</HoverHead><th>Владелец</th><th>Атри…</th><th>Изменён</th></tr>
          </thead>
          <tbody>
            {rightFiles.map(([type, time], i) => (
              <FileRow key={i} $hover={type === '19'}>
                <td><NameCell><FileIcon />17255</NameCell></td>
                <td>{type}</td>
                <td>1 GB</td>
                <td>systemd-cor…</td>
                <td>600</td>
                <td>28.11.2022 {time}…</td>
              </FileRow>
            ))}
          </tbody>
        </FileTable>
        <VScroll $top={54} $size="62px"><Arrow $up $w={14} $color="#8c8c8c" /><Arrow $w={14} $color="#fff" /></VScroll>
      </ListArea>
      <PaneStatus><span>Размер: 53376.5 Mb, папок: 0, файлов: 561</span><span>62.113.105.234</span></PaneStatus>
    </Pane>
  );
}

function SizeWindow() {
  return (
    <Window aria-label="Размер папки">
      <WindowTitle>
        Размер папки
        <WindowButtons>
          <button aria-label="Свернуть"><Glyph s={24} box={24}><path d="M5 16H18" stroke="#16181e" strokeWidth="4" /></Glyph></button>
          <button aria-label="Развернуть"><Glyph s={24} box={24}><path d="M4 7H20V17H4zM4 8.500H20" stroke="#0c0d10" strokeWidth="3" /></Glyph></button>
          <button aria-label="Закрыть"><Glyph s={24} box={24}><path d="M5 5L19 18M19 5L5 18" stroke="#16181e" strokeWidth="3" /></Glyph></button>
        </WindowButtons>
      </WindowTitle>
      <ChartArea><Donut /></ChartArea>
      <SizeList>
        <SizeTable>
          <colgroup>
            <col style={{ width: 108 }} />
            <col style={{ width: 174 }} />
            <col style={{ width: 144 }} />
            <col style={{ width: 146 }} />
            <col />
          </colgroup>
          <thead>
            <tr><th>Цвет</th><th>Размер</th><th><SortLabel>% <Arrow $w={14} /></SortLabel></th><th>Имя</th><th>Путь</th></tr>
          </thead>
          <tbody>
            {swatches.map((color) => (
              <tr key={color}>
                <td><Swatch $color={color} /></td>
                <td>1 GB</td>
                <td>1.92%</td>
                <td><NameCell><FileIcon />172…</NameCell></td>
                <td><NameCell><FolderIcon />/var/lib/jenkins/workspace/crawler_bot/data/db</NameCell></td>
              </tr>
            ))}
          </tbody>
        </SizeTable>
        <VScroll $top={54} $bottom={30} $size="60px"><Arrow $up $w={14} $color="#8c8c8c" /><Arrow $w={14} $color="#fff" /></VScroll>
        <HScroll><Arrow $left $w={8} $h={14} $color="#8c8c8c" /><Arrow $right $w={8} $h={14} $color="#fff" /></HScroll>
      </SizeList>
    </Window>
  );
}

function BrowserTab({ icon, title }) {
  return <Tab $divided>{Favicons[icon]}<TabTitle>{title}</TabTitle></Tab>;
}

function BrowserChrome() {
  return (
    <>
      <TabStrip>
        <TabGroup>
          <GroupName>crawler</GroupName>
          <Tab>{Favicons.mail}<TabTitle>Об</TabTitle></Tab>
          <ActiveTab>
            {Favicons.beget}
            <button aria-label="Закрыть вкладку"><Glyph s={36} box={36}><path d="M11 11L25 25M25 11L11 25" {...line} /></Glyph></button>
          </ActiveTab>
          {groupTabs.map(([icon, title], i) => <BrowserTab key={i} icon={icon} title={title} />)}
        </TabGroup>
        {looseTabs.map(([icon, title], i) => <BrowserTab key={i} icon={icon} title={title} />)}
        <NewTab aria-label="Новая вкладка"><Glyph><path d="M16 4V28M4 16H28" {...line} /></Glyph></NewTab>
        <StripControls>
          <IconButton aria-label="Список вкладок"><Glyph><path d="M8 12L16 20 24 12" {...line} /></Glyph></IconButton>
          <IconButton aria-label="Свернуть окно"><Glyph><path d="M6 25H26" {...line} /></Glyph></IconButton>
          <IconButton aria-label="Восстановить"><Glyph><path d="M12 7H25V19H12zM6 13V26H20" {...line} /></Glyph></IconButton>
          <IconButton aria-label="Закрыть окно"><Glyph><path d="M6 6L26 26M26 6L6 26" {...line} /></Glyph></IconButton>
        </StripControls>
      </TabStrip>
      <AddressRow>
        <IconButton aria-label="Назад"><Glyph><path d="M29 16H5M16 4L4 16 16 28" stroke="#808080" strokeWidth="3" /></Glyph></IconButton>
        <IconButton aria-label="Вперёд"><Glyph><path d="M3 16H27M16 4L28 16 16 28" stroke="#808080" strokeWidth="3" /></Glyph></IconButton>
        <IconButton aria-label="Обновить страницу"><Glyph><path d="M26 20A11 11 0 1 1 23 8L27 12" {...line} /><path d="M28 3V14H17z" fill="#f1f3f4" /></Glyph></IconButton>
        <Omnibox onSubmit={(e) => e.preventDefault()}>
          <Glyph s={24} box={24}><rect x="4" y="9" width="16" height="13" rx="2" fill="#9aa0a6" /><path d="M8 10V6a4 4 0 0 1 8 0V10" stroke="#9aa0a6" strokeWidth="2.5" /></Glyph>
          <input aria-label="Адресная строка" defaultValue="sprutio.beget.com" />
          <IconButton type="button" aria-label="Поделиться"><Glyph><path d="M23 7L9 16 23 25" stroke="#bdc1c6" strokeWidth="2.5" /><circle cx="23" cy="7" r="4" fill="#bdc1c6" /><circle cx="8" cy="16" r="4" fill="#bdc1c6" /><circle cx="23" cy="25" r="4" fill="#bdc1c6" /></Glyph></IconButton>
          <IconButton type="button" aria-label="Добавить в закладки"><Glyph><path d="M16 4L19.500 12.500 28.500 13 21.500 19 24 28 16 23 8 28 10.500 19 3.500 13 12.500 12.500z" stroke="#c9ccd0" strokeWidth="2.5" /></Glyph></IconButton>
        </Omnibox>
        <IconButton aria-label="Переводчик">
          <Glyph><path d="M12 6H30q2 0 2 2V32H20z" fill="#dedede" /><path d="M0 2q0-2 2-2H15L22 26H2q-2 0-2-2z" fill="#5a8cf0" /><path d="M22 26L19 32 16 26z" fill="#3452c5" /><path d="M13 10A4.500 4.500 0 1 0 14 14H10" stroke="#fff" strokeWidth="2" /><path d="M20 15H30M24 13V15M21 24Q27 20 28 15M22 17L29 24" stroke="#6b7785" strokeWidth="1.8" /></Glyph>
        </IconButton>
        <IconButton aria-label="Подсказки">
          <Glyph><rect width="32" height="32" rx="3" fill="#858c90" /><circle cx="16" cy="13" r="8" fill="#fff" /><path d="M12 18H20V22H12zM12 24H20V26H12z" fill="#fff" /></Glyph>
        </IconButton>
        <IconButton aria-label="Пипетка">
          <Glyph s={56} box={56}><path d="M14 40L30 19" stroke="#d7dbe8" strokeWidth="7" /><path d="M15 39L26 25" stroke="#3f66d8" strokeWidth="5" /><path d="M28 22L38 12" stroke="#4d4d4d" strokeWidth="6" /><rect x="32" y="32" width="24" height="24" rx="4" fill="#29366b" /><circle cx="43" cy="46" r="2" fill="#fff" /></Glyph>
        </IconButton>
        <IconButton aria-label="Расширения"><Glyph><path d="M3 8H11V5a4 4 0 0 1 8 0V8H26V15H28a4 4 0 0 1 0 8H26V30H18V28a4 4 0 0 0-8 0V30H3V22H5a4 4 0 0 0 0-7H3z" fill="#f1f3f4" /></Glyph></IconButton>
        <IconButton aria-label="Управление медиа"><Glyph><path d="M0 6H19M0 14H19M0 22H12" {...line} /><circle cx="22" cy="24" r="5" fill="#f1f3f4" /><path d="M25.500 24V5.500H32" {...line} /></Glyph></IconButton>
        <IconButton aria-label="Боковая панель"><Glyph><path d="M4 5H28V27H4z" stroke="#f1f3f4" strokeWidth="4" /><path d="M18 5H28V27H18z" fill="#f1f3f4" /></Glyph></IconButton>
        <IconButton aria-label="Профиль"><Glyph s={44} box={44}><circle cx="22" cy="22" r="22" fill="#9b46bb" /><text x="22" y="30" textAnchor="middle" fontFamily="Noto Sans, sans-serif" fontSize="23" fill="#fff">A</text></Glyph></IconButton>
        <IconButton aria-label="Меню"><Glyph><circle cx="16" cy="5" r="3.500" fill="#f1f3f4" /><circle cx="16" cy="16" r="3.500" fill="#f1f3f4" /><circle cx="16" cy="27" r="3.500" fill="#f1f3f4" /></Glyph></IconButton>
      </AddressRow>
      <Bookmarks aria-label="Закладки">
        {bookmarks.map(([icon, title]) => <Bookmark key={title} href="#">{Favicons[icon]}{title}</Bookmark>)}
        <Overflow>»</Overflow>
        <Rule />
        <Bookmark href="#">{Favicons.folder}Другие закладки</Bookmark>
      </Bookmarks>
    </>
  );
}

export default function App() {
  return (
    <Screen>
      <GlobalStyle />
      <TopBar>
        <Overview>Обзор</Overview>
        <AppMenu><ChromeArt size={32} grey />Google Chrome<Arrow $w={20} $h={11} /></AppMenu>
        <Clock>{'ноя 28  21:17'}</Clock>
        <Tray>
          <Glyph><circle cx="15" cy="15" r="14" fill="#1f98d8" /><path d="M6 16L22 8 19 22 14 17z" fill="#fff" /><rect x="12" y="16" width="19" height="14" rx="5" fill="#f03d36" /><text x="21" y="27" textAnchor="middle" fontFamily="Noto Sans, sans-serif" fontSize="11" fill="#fff">.43</text></Glyph>
          <Language>en<Arrow $w={20} $h={11} /></Language>
          <Glyph><path d="M2 9Q16-3 30 9L16 28z" stroke="#f2f2f2" strokeWidth="2.5" /><path d="M5 13Q16 3 27 13L16 28z" fill="#f2f2f2" /></Glyph>
          <Glyph><path d="M2 11H8L15 3V29L8 21H2z" fill="#f2f2f2" /><path d="M19 10Q23 16 19 22" stroke="#f2f2f2" strokeWidth="2.5" /><path d="M24 6Q32 16 24 26" stroke="#7b7b7b" strokeWidth="2.5" /></Glyph>
          <Glyph><path d="M7 4H25V30H7z" stroke="#f2f2f2" strokeWidth="2.5" /><rect x="12" y="0" width="8" height="4" fill="#f2f2f2" /><rect x="10" y="23" width="12" height="5" fill="#f3702b" /></Glyph>
          <Arrow $w={20} $h={11} />
        </Tray>
      </TopBar>
      <Body>
        <Dock aria-label="Приложения">
          {dockItems.map(([label, art, windows], i) => (
            <DockButton key={label} $active={i === 0} aria-label={label}>
              {art}
              <Running>{Array.from({ length: windows }, (_, n) => <i key={n} />)}</Running>
              {label === 'Telegram' && <Badge>9999</Badge>}
            </DockButton>
          ))}
          <AppsButton aria-label="Показать приложения">{Array.from({ length: 9 }, (_, n) => <i key={n} />)}</AppsButton>
        </Dock>
        <Browser>
          <BrowserChrome />
          <Manager>
            <MenuBar>
              <MenuGroup $gap={44}>
                <MenuItem>Файл<Arrow /></MenuItem>
                <MenuItem>Навигация<Arrow /></MenuItem>
                <MenuItem>Инструменты<Arrow /></MenuItem>
              </MenuGroup>
              <MenuGroup $gap={57}>
                <MenuItem>Язык<Arrow /></MenuItem>
                <MenuItem $gap={12}><Glyph s={24} box={24}><circle cx="12" cy="12" r="10.500" stroke="#f1f2f5" strokeWidth="2.500" /><circle cx="12" cy="12" r="4.500" stroke="#f1f2f5" strokeWidth="2" /><path d="M5 5L9 9M19 5L15 9M5 19L9 15M19 19L15 15" stroke="#f1f2f5" strokeWidth="5" /></Glyph>Помощь</MenuItem>
                <MenuItem $gap={12}><Glyph s={24} box={24}><path d="M7 5A9 9 0 1 0 17 5" stroke="#fff" strokeWidth="3.500" /><path d="M12 0V12" stroke="#fff" strokeWidth="3.500" /></Glyph>Выход</MenuItem>
              </MenuGroup>
            </MenuBar>
            <Toolbar>
              {tools.map(([label, icon, off]) => <ToolButton key={label} disabled={off}>{toolIcons[icon]}{label}</ToolButton>)}
            </Toolbar>
            <Panes><LeftPane /><RightPane /></Panes>
            <TaskBar><TaskButton>Размер папки</TaskButton></TaskBar>
            <KeyBar>{keys.map((key, i) => <KeyButton key={key} disabled={i !== 5}>{key}</KeyButton>)}</KeyBar>
            <SizeWindow />
          </Manager>
        </Browser>
      </Body>
    </Screen>
  );
}
